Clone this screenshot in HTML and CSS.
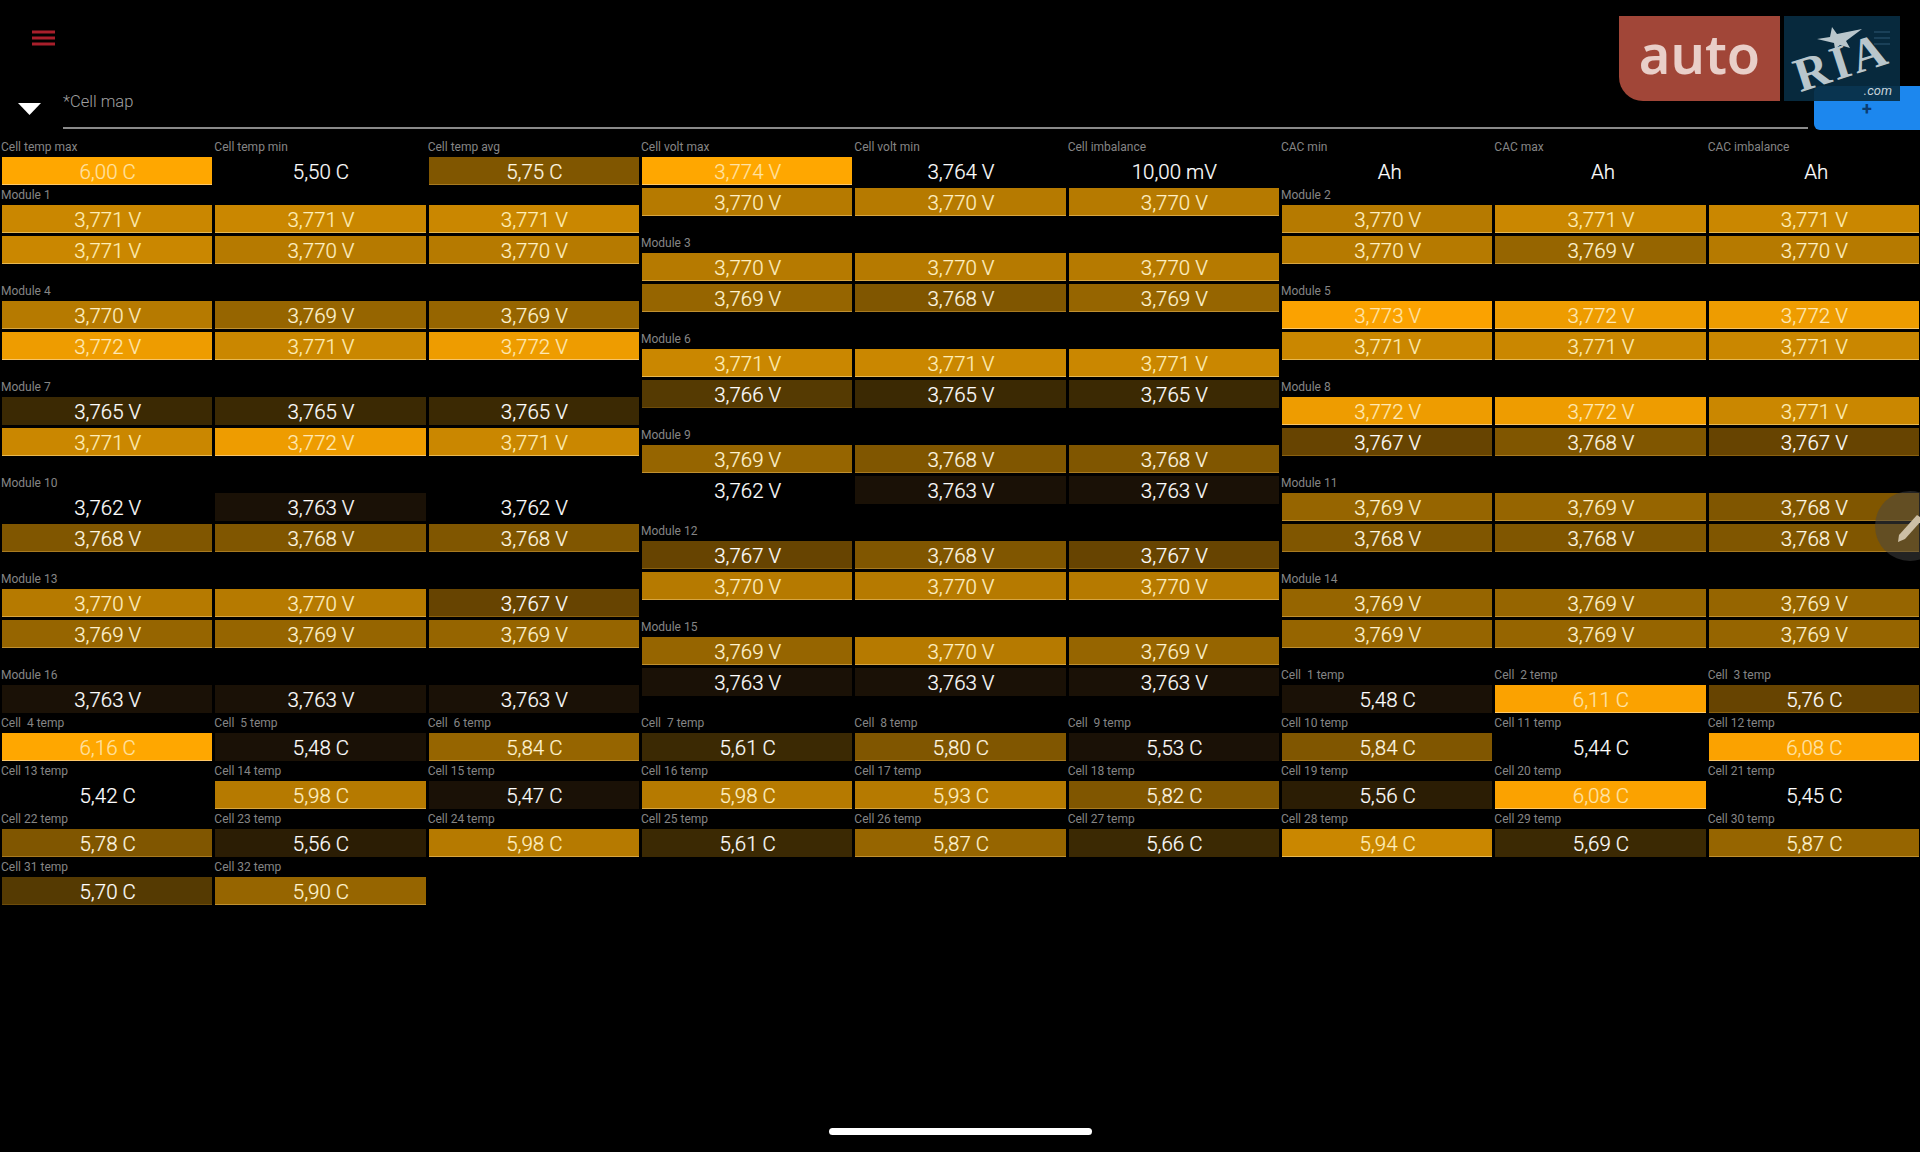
FILE: index.html
```html
<!DOCTYPE html>
<html lang="en">
  <head>
    <meta charset="UTF-8" />
    <meta name="viewport" content="width=device-width, initial-scale=1.0" />
    <title>Cell map</title>
    <link rel="stylesheet" href="styles.css">
  </head>
  <body>
    <header class="top">
      <div class="menu-bar">
        <svg class="menu-icon" width="23" height="16" viewBox="0 0 23 16">
          <path d="M0 2h23M0 8h23M0 14h23" stroke="#a81f2b" stroke-width="3" />
        </svg>
      </div>
      <div class="title-bar">
        <svg class="drop-arrow" width="23" height="12" viewBox="0 0 23 12">
          <path d="M0 0h23L11.500 12z" fill="#fff" />
        </svg>
        <div class="title-field">*Cell map</div>
      </div>
    </header>

    <main class="groups">
      <!-- temperatures and modules 1, 4, 7, 10, 13, 16 -->
      <section class="group">
        <div class="row">
          <div class="tile"><span class="tile-label">Cell temp max</span><span class="val lvl-12">6,00 C</span></div>
          <div class="tile"><span class="tile-label">Cell temp min</span><span class="val lvl-0">5,50 C</span></div>
          <div class="tile"><span class="tile-label">Cell temp avg</span><span class="val lvl-6">5,75 C</span></div>
        </div>
        <div class="module">
          <h3 class="tile-label">Module 1</h3>
          <div class="row"><span class="val lvl-9">3,771 V</span><span class="val lvl-9">3,771 V</span><span class="val lvl-9">3,771 V</span></div>
          <div class="row"><span class="val lvl-9">3,771 V</span><span class="val lvl-8">3,770 V</span><span class="val lvl-8">3,770 V</span></div>
        </div>
        <div class="module">
          <h3 class="tile-label">Module 4</h3>
          <div class="row"><span class="val lvl-8">3,770 V</span><span class="val lvl-7">3,769 V</span><span class="val lvl-7">3,769 V</span></div>
          <div class="row"><span class="val lvl-10">3,772 V</span><span class="val lvl-9">3,771 V</span><span class="val lvl-10">3,772 V</span></div>
        </div>
        <div class="module">
          <h3 class="tile-label">Module 7</h3>
          <div class="row"><span class="val lvl-3">3,765 V</span><span class="val lvl-3">3,765 V</span><span class="val lvl-3">3,765 V</span></div>
          <div class="row"><span class="val lvl-9">3,771 V</span><span class="val lvl-10">3,772 V</span><span class="val lvl-9">3,771 V</span></div>
        </div>
        <div class="module">
          <h3 class="tile-label">Module 10</h3>
          <div class="row"><span class="val lvl-0">3,762 V</span><span class="val lvl-1">3,763 V</span><span class="val lvl-0">3,762 V</span></div>
          <div class="row"><span class="val lvl-6">3,768 V</span><span class="val lvl-6">3,768 V</span><span class="val lvl-6">3,768 V</span></div>
        </div>
        <div class="module">
          <h3 class="tile-label">Module 13</h3>
          <div class="row"><span class="val lvl-8">3,770 V</span><span class="val lvl-8">3,770 V</span><span class="val lvl-5">3,767 V</span></div>
          <div class="row"><span class="val lvl-7">3,769 V</span><span class="val lvl-7">3,769 V</span><span class="val lvl-7">3,769 V</span></div>
        </div>
        <h3 class="tile-label">Module 16</h3>
        <div class="row"><span class="val lvl-1">3,763 V</span><span class="val lvl-1">3,763 V</span><span class="val lvl-1">3,763 V</span></div>
        <div class="row">
          <div class="tile"><span class="tile-label">Cell  4 temp</span><span class="val lvl-12">6,16 C</span></div>
          <div class="tile"><span class="tile-label">Cell  5 temp</span><span class="val lvl-1">5,48 C</span></div>
          <div class="tile"><span class="tile-label">Cell  6 temp</span><span class="val lvl-7">5,84 C</span></div>
        </div>
        <div class="row">
          <div class="tile"><span class="tile-label">Cell 13 temp</span><span class="val lvl-0">5,42 C</span></div>
          <div class="tile"><span class="tile-label">Cell 14 temp</span><span class="val lvl-8">5,98 C</span></div>
          <div class="tile"><span class="tile-label">Cell 15 temp</span><span class="val lvl-1">5,47 C</span></div>
        </div>
        <div class="row">
          <div class="tile"><span class="tile-label">Cell 22 temp</span><span class="val lvl-6">5,78 C</span></div>
          <div class="tile"><span class="tile-label">Cell 23 temp</span><span class="val lvl-2">5,56 C</span></div>
          <div class="tile"><span class="tile-label">Cell 24 temp</span><span class="val lvl-8">5,98 C</span></div>
        </div>
        <div class="row">
          <div class="tile"><span class="tile-label">Cell 31 temp</span><span class="val lvl-4">5,70 C</span></div>
          <div class="tile"><span class="tile-label">Cell 32 temp</span><span class="val lvl-7">5,90 C</span></div>
        </div>
      </section>

      <!-- voltages and modules 3, 6, 9, 12, 15 -->
      <section class="group">
        <div class="row">
          <div class="tile"><span class="tile-label">Cell volt max</span><span class="val lvl-12">3,774 V</span></div>
          <div class="tile"><span class="tile-label">Cell volt min</span><span class="val lvl-0">3,764 V</span></div>
          <div class="tile"><span class="tile-label">Cell imbalance</span><span class="val lvl-0">10,00 mV</span></div>
        </div>
        <div class="module">
          <div class="row"><span class="val lvl-8">3,770 V</span><span class="val lvl-8">3,770 V</span><span class="val lvl-8">3,770 V</span></div>
        </div>
        <div class="module">
          <h3 class="tile-label">Module 3</h3>
          <div class="row"><span class="val lvl-8">3,770 V</span><span class="val lvl-8">3,770 V</span><span class="val lvl-8">3,770 V</span></div>
          <div class="row"><span class="val lvl-7">3,769 V</span><span class="val lvl-6">3,768 V</span><span class="val lvl-7">3,769 V</span></div>
        </div>
        <div class="module">
          <h3 class="tile-label">Module 6</h3>
          <div class="row"><span class="val lvl-9">3,771 V</span><span class="val lvl-9">3,771 V</span><span class="val lvl-9">3,771 V</span></div>
          <div class="row"><span class="val lvl-4">3,766 V</span><span class="val lvl-3">3,765 V</span><span class="val lvl-3">3,765 V</span></div>
        </div>
        <div class="module">
          <h3 class="tile-label">Module 9</h3>
          <div class="row"><span class="val lvl-7">3,769 V</span><span class="val lvl-6">3,768 V</span><span class="val lvl-6">3,768 V</span></div>
          <div class="row"><span class="val lvl-0">3,762 V</span><span class="val lvl-1">3,763 V</span><span class="val lvl-1">3,763 V</span></div>
        </div>
        <div class="module">
          <h3 class="tile-label">Module 12</h3>
          <div class="row"><span class="val lvl-5">3,767 V</span><span class="val lvl-6">3,768 V</span><span class="val lvl-5">3,767 V</span></div>
          <div class="row"><span class="val lvl-8">3,770 V</span><span class="val lvl-8">3,770 V</span><span class="val lvl-8">3,770 V</span></div>
        </div>
        <div class="module">
          <h3 class="tile-label">Module 15</h3>
          <div class="row"><span class="val lvl-7">3,769 V</span><span class="val lvl-8">3,770 V</span><span class="val lvl-7">3,769 V</span></div>
          <div class="row"><span class="val lvl-1">3,763 V</span><span class="val lvl-1">3,763 V</span><span class="val lvl-1">3,763 V</span></div>
        </div>
        <div class="row">
          <div class="tile"><span class="tile-label">Cell  7 temp</span><span class="val lvl-3">5,61 C</span></div>
          <div class="tile"><span class="tile-label">Cell  8 temp</span><span class="val lvl-6">5,80 C</span></div>
          <div class="tile"><span class="tile-label">Cell  9 temp</span><span class="val lvl-1">5,53 C</span></div>
        </div>
        <div class="row">
          <div class="tile"><span class="tile-label">Cell 16 temp</span><span class="val lvl-8">5,98 C</span></div>
          <div class="tile"><span class="tile-label">Cell 17 temp</span><span class="val lvl-8">5,93 C</span></div>
          <div class="tile"><span class="tile-label">Cell 18 temp</span><span class="val lvl-6">5,82 C</span></div>
        </div>
        <div class="row">
          <div class="tile"><span class="tile-label">Cell 25 temp</span><span class="val lvl-3">5,61 C</span></div>
          <div class="tile"><span class="tile-label">Cell 26 temp</span><span class="val lvl-7">5,87 C</span></div>
          <div class="tile"><span class="tile-label">Cell 27 temp</span><span class="val lvl-3">5,66 C</span></div>
        </div>
      </section>

      <!-- capacity and modules 2, 5, 8, 11, 14 -->
      <section class="group">
        <div class="row">
          <div class="tile"><span class="tile-label">CAC min</span><span class="val lvl-0 val-unit">Ah</span></div>
          <div class="tile"><span class="tile-label">CAC max</span><span class="val lvl-0 val-unit">Ah</span></div>
          <div class="tile"><span class="tile-label">CAC imbalance</span><span class="val lvl-0 val-unit">Ah</span></div>
        </div>
        <div class="module">
          <h3 class="tile-label">Module 2</h3>
          <div class="row"><span class="val lvl-8">3,770 V</span><span class="val lvl-9">3,771 V</span><span class="val lvl-9">3,771 V</span></div>
          <div class="row"><span class="val lvl-8">3,770 V</span><span class="val lvl-7">3,769 V</span><span class="val lvl-8">3,770 V</span></div>
        </div>
        <div class="module">
          <h3 class="tile-label">Module 5</h3>
          <div class="row"><span class="val lvl-11">3,773 V</span><span class="val lvl-10">3,772 V</span><span class="val lvl-10">3,772 V</span></div>
          <div class="row"><span class="val lvl-9">3,771 V</span><span class="val lvl-9">3,771 V</span><span class="val lvl-9">3,771 V</span></div>
        </div>
        <div class="module">
          <h3 class="tile-label">Module 8</h3>
          <div class="row"><span class="val lvl-10">3,772 V</span><span class="val lvl-10">3,772 V</span><span class="val lvl-9">3,771 V</span></div>
          <div class="row"><span class="val lvl-5">3,767 V</span><span class="val lvl-6">3,768 V</span><span class="val lvl-5">3,767 V</span></div>
        </div>
        <div class="module">
          <h3 class="tile-label">Module 11</h3>
          <div class="row"><span class="val lvl-7">3,769 V</span><span class="val lvl-7">3,769 V</span><span class="val lvl-6">3,768 V</span></div>
          <div class="row"><span class="val lvl-6">3,768 V</span><span class="val lvl-6">3,768 V</span><span class="val lvl-6">3,768 V</span></div>
        </div>
        <div class="module">
          <h3 class="tile-label">Module 14</h3>
          <div class="row"><span class="val lvl-7">3,769 V</span><span class="val lvl-7">3,769 V</span><span class="val lvl-7">3,769 V</span></div>
          <div class="row"><span class="val lvl-7">3,769 V</span><span class="val lvl-7">3,769 V</span><span class="val lvl-7">3,769 V</span></div>
        </div>
        <div class="row">
          <div class="tile"><span class="tile-label">Cell  1 temp</span><span class="val lvl-1">5,48 C</span></div>
          <div class="tile"><span class="tile-label">Cell  2 temp</span><span class="val lvl-11">6,11 C</span></div>
          <div class="tile"><span class="tile-label">Cell  3 temp</span><span class="val lvl-5">5,76 C</span></div>
        </div>
        <div class="row">
          <div class="tile"><span class="tile-label">Cell 10 temp</span><span class="val lvl-6">5,84 C</span></div>
          <div class="tile"><span class="tile-label">Cell 11 temp</span><span class="val lvl-0">5,44 C</span></div>
          <div class="tile"><span class="tile-label">Cell 12 temp</span><span class="val lvl-11">6,08 C</span></div>
        </div>
        <div class="row">
          <div class="tile"><span class="tile-label">Cell 19 temp</span><span class="val lvl-2">5,56 C</span></div>
          <div class="tile"><span class="tile-label">Cell 20 temp</span><span class="val lvl-11">6,08 C</span></div>
          <div class="tile"><span class="tile-label">Cell 21 temp</span><span class="val lvl-0">5,45 C</span></div>
        </div>
        <div class="row">
          <div class="tile"><span class="tile-label">Cell 28 temp</span><span class="val lvl-9">5,94 C</span></div>
          <div class="tile"><span class="tile-label">Cell 29 temp</span><span class="val lvl-3">5,69 C</span></div>
          <div class="tile"><span class="tile-label">Cell 30 temp</span><span class="val lvl-7">5,87 C</span></div>
        </div>
      </section>
    </main>

    <!-- things floating above the page -->
    <button class="add-btn">+</button>
    <div class="watermark">
      <div class="wm-auto">auto</div>
      <div class="wm-ria">
        <svg class="wm-lines" width="16" height="16" viewBox="0 0 16 16">
          <path d="M0 2h16M0 8h16M0 14h16" stroke="#1a4058" stroke-width="2" />
        </svg>
        <svg class="wm-star" width="46" height="24" viewBox="0 0 46 24">
          <path d="M15 1l5 7 25-5-16 12 4 7-10-3-5 4-1-6-17-4 13-2z" fill="#b9c6cc" />
        </svg>
        <span class="wm-name">RIA</span>
        <span class="wm-com">.com</span>
      </div>
    </div>
    <button class="edit-btn">
      <svg width="24" height="28" viewBox="0 0 24 28">
        <path d="M19 0L1 20l-1 7 7-3L25 4z" fill="#cdbfa5" />
      </svg>
    </button>
    <div class="home-bar"></div>
  </body>
</html>
```

FILE: styles.css
```css
body {
  font-family: "Roboto", "Liberation Sans", sans-serif;
  margin: 0;
  padding: 0;
  background-color: #000;
  color: #fff;
  height: 1152px;
  overflow: hidden;
  position: relative;
}

.top {
  height: 140px;
}

.menu-bar {
  height: 80px;
  padding: 30px 0 0 32px;
  box-sizing: border-box;
}

.title-bar {
  display: flex;
  align-items: flex-start;
  padding-left: 18px;
}

.drop-arrow {
  margin-top: 23px;
}

.title-field {
  margin: 0 112px 0 22px;
  flex: 1;
  height: 47px;
  line-height: 43px;
  font-size: 16.5px;
  font-weight: 300;
  color: #a0a0a0;
  border-bottom: 2px solid #8a8a8a;
}

.groups {
  display: flex;
}

.group {
  flex: 1;
  min-width: 0;
}

.module {
  margin-bottom: 17px;
}

.row {
  display: grid;
  grid-template-columns: repeat(3, 1fr);
}

.tile {
  display: flex;
  flex-direction: column;
}

.tile-label {
  display: block;
  height: 17px;
  margin: 0;
  padding-left: 1px;
  font-size: 12px;
  font-weight: 400;
  line-height: 15px;
  color: #858585;
  white-space: pre;
}

.val {
  display: block;
  height: 28px;
  margin: 0 1px 3px 2px;
  padding-left: 1px;
  font-size: 20.5px;
  font-weight: 300;
  line-height: 30px;
  text-align: center;
  -webkit-text-stroke: 0.2px currentColor;
}

.val-unit {
  padding-left: 5px;
}

/* shade follows the value, 0 = lowest in the pack, 12 = highest */
.lvl-0 { background-color: #000; }
.lvl-1 { background-color: #1a1106; }
.lvl-2 { background-color: #2b1d04; }
.lvl-3 { background-color: #3b2903; }
.lvl-4 { background-color: #553a02; box-shadow: inset 0 -1px #6e4c0a; }
.lvl-5 { background-color: #674401; box-shadow: inset 0 -1px #8a6110; }
.lvl-6 { background-color: #805600; color: #fff8e4; box-shadow: inset 0 -1px #a87a20; }
.lvl-7 { background-color: #966500; color: #fff4d2; box-shadow: inset 0 -1px #c09030; }
.lvl-8 { background-color: #b67a00; color: #fff0c4; box-shadow: inset 0 -1px #d8a540; }
.lvl-9 { background-color: #ca8700; color: #ffeeb8; box-shadow: inset 0 -1px #e8b850; }
.lvl-10 { background-color: #ee9c00; color: #ffe8b4; box-shadow: inset 0 -1px #f8c468; }
.lvl-11 { background-color: #fba200; color: #ffe4aa; box-shadow: inset 0 -1px #ffc868; }
.lvl-12 { background-color: #ffa700; color: #ffe2a4; box-shadow: inset 0 -1px #ffc868; }

.add-btn {
  position: absolute;
  top: 86px;
  left: 1814px;
  width: 106px;
  height: 44px;
  padding: 0;
  border: 0;
  border-radius: 6px 0 0 6px;
  background-color: #1c87ee;
  color: #0b3c70;
  font-family: inherit;
  font-size: 18px;
  font-weight: 700;
}

.watermark {
  position: absolute;
  top: 16px;
  left: 1619px;
  display: flex;
  gap: 4px;
  height: 85px;
}

.wm-auto {
  width: 161px;
  border-radius: 0 0 0 24px;
  background-color: #a14638;
  color: #e9cfc9;
  font-family: "Noto Sans", sans-serif;
  font-size: 54px;
  font-weight: 600;
  line-height: 74px;
  text-align: center;
}

.wm-ria {
  position: relative;
  width: 116px;
  background-color: rgba(8, 45, 66, 0.92);
}

.wm-lines {
  position: absolute;
  top: 14px;
  right: 10px;
}

.wm-star {
  position: absolute;
  top: 10px;
  left: 33px;
}

.wm-name {
  position: absolute;
  top: 24px;
  left: 9px;
  font-family: "Liberation Serif", serif;
  font-size: 48px;
  font-weight: 700;
  line-height: 44px;
  letter-spacing: 3px;
  color: #b9c6cc;
  transform: rotate(-18deg);
}

.wm-com {
  position: absolute;
  right: 8px;
  bottom: 3px;
  font-size: 13px;
  font-style: italic;
  color: #c6d2d8;
}

.edit-btn {
  position: absolute;
  top: 491px;
  left: 1875px;
  width: 70px;
  height: 70px;
  padding: 0;
  border: 0;
  border-radius: 50%;
  background-color: rgba(70, 70, 70, 0.5);
}

.edit-btn svg {
  position: absolute;
  top: 24px;
  left: 23px;
}

.home-bar {
  position: absolute;
  left: 829px;
  top: 1128px;
  width: 263px;
  height: 7px;
  border-radius: 4px;
  background-color: #fff;
}
```
